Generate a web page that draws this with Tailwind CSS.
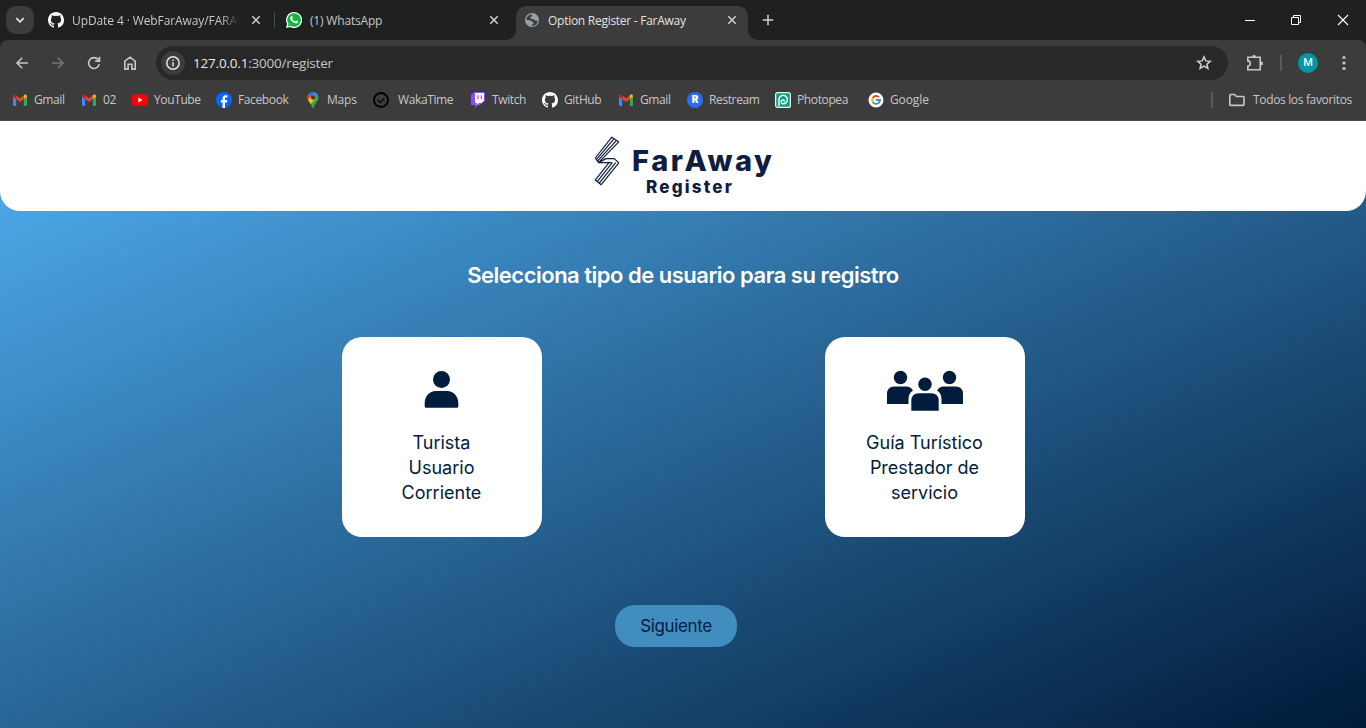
<!DOCTYPE html>
<html lang="es">
<head>
<meta charset="utf-8">
<title>Option Register - FarAway</title>
<script src="https://cdn.jsdelivr.net/npm/@tailwindcss/browser@4"></script>
</head>
<body class="w-[1366px] h-[728px] overflow-hidden flex flex-col bg-[#3c3c3c] font-['Open_Sans',sans-serif] text-[12px] text-[#c7c7c7]">
<svg width="0" height="0" class="absolute">
  <defs>
    <symbol id="github" viewBox="0 0 16 16"><path fill="#fff" d="M8 0C3.58 0 0 3.58 0 8c0 3.54 2.29 6.53 5.47 7.59.4.07.55-.17.55-.38 0-.19-.01-.82-.01-1.49-2.01.37-2.53-.49-2.69-.94-.09-.23-.48-.94-.82-1.13-.28-.15-.68-.52-.01-.53.63-.01 1.08.58 1.23.82.72 1.21 1.87.87 2.33.66.07-.52.28-.87.51-1.07-1.78-.2-3.64-.89-3.64-3.95 0-.87.31-1.59.82-2.15-.08-.2-.36-1.02.08-2.12 0 0 .67-.21 2.2.82.64-.18 1.32-.27 2-.27s1.36.09 2 .27c1.53-1.04 2.2-.82 2.2-.82.44 1.1.16 1.92.08 2.12.51.56.82 1.27.82 2.15 0 3.07-1.87 3.75-3.65 3.95.29.25.54.73.54 1.48 0 1.07-.01 1.93-.01 2.2 0 .21.15.46.55.38A8.01 8.01 0 0 0 16 8c0-4.42-3.58-8-8-8z"/></symbol>
    <symbol id="gmail" viewBox="0 0 16 16"><path fill="#4285f4" d="M1 4.5l3.2 2.4v7H2a1 1 0 0 1-1-1z"/><path fill="#34a853" d="M15 4.5l-3.2 2.4v7H14a1 1 0 0 0 1-1z"/><path fill="#ea4335" d="M4.2 3.4L8 6.3l3.8-2.9v3.7L8 10 4.2 7.1z"/><path fill="#c5221f" d="M1 4.3c0-1.6 1.7-2.2 2.8-1.3l.4.3v3.8L1 4.8z"/><path fill="#fbbc04" d="M15 4.3c0-1.6-1.7-2.2-2.8-1.3l-.4.3v3.8L15 4.8z"/></symbol>
    <symbol id="close" viewBox="0 0 10 10"><path d="M1.3 1.3l7.4 7.4M8.7 1.3L1.3 8.7" stroke="#d0d0d0" stroke-width="1.5" fill="none"/></symbol>
  </defs>
</svg>

<!-- Tab strip -->
<header class="h-10 shrink-0 bg-[#1f2120] flex items-start">
  <div class="ml-[6px] mt-[6px] w-7 h-7 rounded-[10px] bg-[#3c3c3c] flex items-center justify-center"><svg width="10" height="10" viewBox="0 0 10 10" fill="none" stroke="#e3e3e3" stroke-width="1.7"><path d="M1.3 3.2L5 6.8l3.7-3.6"/></svg></div>
  <div class="h-10 w-[241px] pl-[14px] flex items-center">
    <svg width="16" height="16" class="shrink-0"><use href="#github"/></svg>
    <div class="ml-2 w-[168px] overflow-hidden whitespace-nowrap pt-px tracking-[-0.1px] [mask-image:linear-gradient(90deg,#000_88%,transparent)]">UpDate 4 · WebFarAway/FARAW</div>
    <svg width="10" height="10" class="ml-[11px] shrink-0"><use href="#close"/></svg>
  </div>
  <div class="h-10 w-[241px] pl-[11px] flex items-center relative">
    <i class="absolute left-[-1px] top-3 w-px h-4 bg-[#4a4b4b]"></i>
    <svg width="16" height="16" viewBox="0 0 16 16" class="shrink-0"><path fill="#fff" d="M8 0a8 8 0 1 1-3.8 15L0 16l1.1-4A8 8 0 0 1 8 0z"/><path fill="#12b83d" d="M8 1.2a6.8 6.8 0 1 1-3.5 12.6l-2.8.7.8-2.7A6.8 6.8 0 0 1 8 1.2z"/><path fill="#fff" d="M5.1 4.2c.6-.6 1-.5 1.2 0l.6 1.4c.1.5-.7 1-.6 1.3.6 1.200 1.500 2 2.700 2.500.4.1.9-1.100 1.300-.9l1.500.8c.5.3.1 1.300-.4 1.700-1.100.9-3 .2-4.500-.9C5.300 9 4.300 7.500 4.200 6.300c0-.9.3-1.500.9-2.100z"/></svg>
    <div class="ml-2 w-[179px] whitespace-nowrap pt-px tracking-[-0.18px]">(1) WhatsApp</div>
    <svg width="10" height="10" class="shrink-0"><use href="#close"/></svg>
  </div>
  <div class="relative mt-[6px] h-[34px] w-[232px] rounded-t-[10px] bg-[#3c3c3c] flex items-center pl-[9px] pb-[6px] text-[#e3e3e3]">
    <svg class="absolute -left-[10px] bottom-0" width="10" height="10"><path fill="#3c3c3c" d="M10 0v10H0A10 10 0 0 0 10 0z"/></svg>
    <svg class="absolute -right-[10px] bottom-0" width="10" height="10"><path fill="#3c3c3c" d="M0 0v10h10A10 10 0 0 1 0 0z"/></svg>
    <svg width="14" height="14" viewBox="0 0 14 14" class="shrink-0"><circle cx="7" cy="7" r="7" fill="#9aa0a6"/><path d="M7.200 1.300L6.700 3.500 5 4.200l1.300 1.700 2.400.3 1.300 1.300 2.700.2A5.800 5.800 0 0 1 7.200 12.800L6 12.500l2-1.500.6-1.800L6.900 8.700 6 7.500 1.300 6.700A5.800 5.800 0 0 1 7.200 1.300z" fill="#3c3c3c"/></svg>
    <div class="ml-[9px] w-[179px] whitespace-nowrap pt-px tracking-[-0.27px]">Option Register - FarAway</div>
    <svg width="10" height="10" class="shrink-0"><use href="#close"/></svg>
  </div>
  <svg width="12" height="12" viewBox="0 0 12 12" class="ml-[14px] mt-[14px]" stroke="#d0d0d0" stroke-width="1.5"><path d="M6 .8v10.400M.8 6h10.400"/></svg>
  <div class="ml-auto mr-[21px] h-10 flex items-center gap-9">
    <svg width="10" height="10" stroke="#fff"><path d="M0 5.500h10"/></svg>
    <svg width="10" height="10" viewBox="0 0 10 10" fill="none" stroke="#fff"><path d="M.5 2.500h7v7h-7zM2.500 2.500v-2h7v7h-2"/></svg>
    <svg width="12" height="12" viewBox="0 0 12 12" stroke="#fff" stroke-width="1.100" class="-mr-1"><path d="M1 1l10 10M11 1L1 11"/></svg>
  </div>
</header>

<!-- Toolbar -->
<div class="bg-[#1f2120] shrink-0"><div class="h-[46px] bg-[#3c3c3c] rounded-t-[8px] flex items-center pl-[14px]">
  <div class="flex gap-5 w-[142px]">
    <svg width="16" height="16" viewBox="0 0 16 16" fill="none" stroke="#c7c7c7" stroke-width="1.600"><path d="M14 8H3M8.200 2.800L3 8l5.200 5.200"/></svg>
    <svg width="16" height="16" viewBox="0 0 16 16" fill="none" stroke="#757575" stroke-width="1.600"><path d="M2 8h11M7.800 2.800L13 8l-5.200 5.200"/></svg>
    <svg width="16" height="16" viewBox="0 0 16 16" fill="none" stroke="#c7c7c7" stroke-width="1.600"><path d="M13.300 9.200A5.400 5.400 0 1 1 12.200 4.600L13 5.500M13.500 1.800v4.300H9.200"/></svg>
    <svg width="16" height="16" viewBox="0 0 16 16" fill="none" stroke="#c7c7c7" stroke-width="1.600"><path d="M2.800 6.200L8 2.200l5.200 4v7.900H9.900V9.300H6.100v4.800H2.800z"/></svg>
  </div>
  <div class="w-[1072px] h-[34px] rounded-full bg-[#282828] flex items-center pl-[5px] text-[13.500px] tracking-[-0.2px]">
    <div class="w-6 h-6 rounded-full bg-[#3c3c3c] flex items-center justify-center"><svg width="14" height="14" viewBox="0 0 14 14" fill="none" stroke="#e3e3e3" stroke-width="1.500"><circle cx="7" cy="7" r="6.200"/><path d="M7 6.200v4.200M7 3.600v1.500"/></svg></div>
    <div class="ml-2 whitespace-nowrap"><span class="text-[#e8e8e8]">127.0.0.1</span>:3000/register</div>
    <svg width="16" height="16" viewBox="0 0 16 16" class="ml-auto mr-4" fill="none" stroke="#d0d0d0" stroke-width="1.500"><path d="M8 1.900l1.800 4 4.400.4-3.300 2.900 1 4.300L8 11.200l-3.900 2.300 1-4.300-3.300-2.900 4.400-.4z"/></svg>
  </div>
  <svg width="18" height="18" viewBox="0 0 18 18" class="ml-[18px]" fill="none" stroke="#c7c7c7" stroke-width="1.600"><path d="M1.800 3.300h12.400v12.400H1.800v-3.600c3.300-.3 3.300-4.900 0-5.200z"/><path fill="#c7c7c7" stroke="none" d="M6 3a2 2 0 0 1 4 0zM15 7.500a2 2 0 0 1 0 4z"/></svg>
  <i class="ml-4 w-[2px] h-4 bg-[#5a5a5a]"></i>
  <div class="ml-4 w-5 h-5 rounded-full bg-[#0097a7] text-white text-[11px] font-medium font-[Roboto,sans-serif] flex items-center justify-center">M</div>
  <svg width="4" height="16" viewBox="0 0 4 16" class="ml-6" fill="#c7c7c7"><circle cx="2" cy="2.500" r="1.600"/><circle cx="2" cy="8" r="1.600"/><circle cx="2" cy="13.500" r="1.600"/></svg>
</div></div>

<!-- Bookmarks bar -->
<nav class="h-[35px] shrink-0 border-b border-[#4a4a4a] flex items-center pl-3 pb-[7px] whitespace-nowrap tracking-[-0.38px]">
  <div class="w-[69px] flex items-center gap-1.5"><svg width="16" height="16"><use href="#gmail"/></svg>Gmail</div>
  <div class="w-[51px] flex items-center gap-1.5"><svg width="16" height="16"><use href="#gmail"/></svg>02</div>
  <div class="w-[84px] flex items-center gap-1.5"><svg width="16" height="16" viewBox="0 0 16 16"><rect y="2.200" width="16" height="11.600" rx="3" fill="#f00"/><path fill="#fff" d="M6.300 5.500L10.600 8l-4.300 2.500z"/></svg>YouTube</div>
  <div class="w-[89px] flex items-center gap-1.5"><svg width="16" height="16" viewBox="0 0 16 16"><circle cx="8" cy="8" r="8" fill="#0866ff"/><path fill="#fff" d="M6.600 16v-5.600H4.900V8h1.700V6.800c0-2.500 1.200-3.800 3.800-3.500l1 .1v2.100h-1.200c-.9 0-1.200.4-1.200 1.200V8h2.300l-.4 2.400H9V16z"/></svg>Facebook</div>
  <div class="w-[68px] flex items-center gap-1.5 tracking-[-0.2px]"><svg width="16" height="16" viewBox="0 0 16 16"><clipPath id="pin"><path d="M8 0a5.600 5.600 0 0 1 5.600 5.600c0 3.400-3.300 5.200-4.500 9-.4 1.900-1.800 1.900-2.200 0-1-3.700-4.500-5.600-4.500-9A5.600 5.600 0 0 1 8 0z"/></clipPath><g clip-path="url(#pin)"><path fill="#34a853" d="M0 0h16v16H0z"/><path fill="#4285f4" d="M4 0h12L8 7.500z"/><path fill="#1a73e8" d="M6 0h3L5 6 2 3z"/><path fill="#ea4335" d="M2 2l2.500.5L7 5 3 9z"/><path fill="#fbbc04" d="M2 9l5-5.500 3 3.500-5 6z"/></g><circle cx="8" cy="5.600" r="2.100" fill="#3c3c3c"/></svg>Maps</div>
  <div class="w-[97px] flex items-center gap-[9px]"><svg width="16" height="16" viewBox="0 0 16 16" fill="none" stroke="#000"><circle cx="8" cy="8" r="7" stroke-width="1.800"/><path d="M4.800 8l2.400 2.600 4.200-4.500" stroke-width="1.300"/></svg>WakaTime</div>
  <div class="w-[72px] flex items-center gap-1.5"><svg width="16" height="16" viewBox="0 0 16 16"><path fill="#9146ff" d="M4 0h11v9l-5 4H8l-3 3v-3H1V3z"/><path fill="#fff" d="M5 1h9v7.500L11.500 11H9l-2.200 2v-2H5z"/><path stroke="#9146ff" stroke-width="1.200" d="M8 3.200v4M11.300 3.200v4"/></svg>Twitch</div>
  <div class="w-[76px] flex items-center gap-1.5"><svg width="16" height="16"><use href="#github"/></svg>GitHub</div>
  <div class="w-[69px] flex items-center gap-1.5"><svg width="16" height="16"><use href="#gmail"/></svg>Gmail</div>
  <div class="w-[88px] flex items-center gap-1.5"><span class="w-4 h-4 rounded-full bg-[#2a6cf7] text-white text-[10px] font-black font-[Inter,sans-serif] flex items-center justify-center">R</span>Restream</div>
  <div class="w-[93px] flex items-center gap-1.5"><svg width="16" height="16" viewBox="0 0 16 16" fill="none"><rect x=".6" y=".6" width="14.800" height="14.800" rx="2" fill="#0fa08c" stroke="#e8f5f2" stroke-width="1.200"/><path stroke="#fff" stroke-width="1.400" d="M4 14V8.200a4.200 4.200 0 1 1 4.300 3.600c-2.300 0-2.900-3.400-.7-3.900 1.600-.3 2 1 1.200 1.700"/></svg>Photopea</div>
  <div class="flex items-center gap-1.5 tracking-[-0.1px]"><svg width="16" height="16" viewBox="0 0 16 16" fill="none"><circle cx="8" cy="8" r="7.500" fill="#fff"/><g stroke-width="1.900"><path stroke="#ea4335" d="M4.700 5.900a4 4 0 0 1 6.300-.7"/><path stroke="#fbbc05" d="M4.700 5.900a4 4 0 0 0 0 4.200"/><path stroke="#34a853" d="M4.700 10.100A4 4 0 0 0 10.600 11"/><path stroke="#4285f4" d="M8 8h4a4 4 0 0 1-1.400 3"/></g></svg>Google</div>
  <i class="ml-auto w-[2px] h-4 bg-[#5a5a5a]"></i>
  <svg width="18" height="16" viewBox="0 0 18 16" class="ml-[15px]" fill="none" stroke="#c7c7c7" stroke-width="1.600"><path d="M1.800 12.600V3.300q0-.8.800-.8h4l1.800 2h6.800q.8 0 .8.800v7.300q0 .8-.8.800H2.600q-.8 0-.8-.8z"/></svg>
  <span class="ml-[7px] w-[113px] tracking-[-0.34px]">Todos los favoritos</span>
</nav>

<!-- Page -->
<main class="h-[607px] shrink-0 bg-[linear-gradient(156deg,#50b0f2,#001a39)] font-[Inter,sans-serif] text-[#011c3c]">
  <div class="h-[90px] bg-white rounded-b-[20px] flex justify-center text-[#101d40]">
    <div class="w-[180px] pt-[14px] flex">
      <svg width="28" height="52" viewBox="0 0 28 52" class="shrink-0" fill="none" stroke="#101d40" stroke-width="1.200" stroke-linejoin="round"><path d="M18.800 2.200L2.300 23l3.200 4.600L25.800 6.900zM21.100 3.700L3.400 24.600M23.500 5.300L4.500 26.200M5.500 27.600L13 23.600h8.200l4.600 4.200M5.500 27.600h13M25.800 27.800L8.200 49.700l-6-4.600L16 27.600M19.300 27.600L4.200 46.700M22.700 27.600L6.200 48.200M2.200 45.100L8.200 49.700"/></svg>
      <div class="font-extrabold whitespace-nowrap">
        <div class="ml-[11px] mt-[11px] text-[29px] leading-[30px] tracking-[2.600px]">FarAway</div>
        <div class="ml-[25px] mt-[1px] text-[17px] leading-5 tracking-[2.200px]">Register</div>
      </div>
    </div>
  </div>
  <h1 class="mt-[47px] h-[34px] leading-[34px] text-center text-[22px] font-semibold text-white tracking-[-0.500px]">Selecciona tipo de usuario para su registro</h1>
  <div class="mt-[45px] flex justify-center gap-[283px] text-[18px] leading-[25px] text-center">
    <section class="w-[200px] h-[200px] rounded-[20px] bg-white flex flex-col items-center pt-[33px]">
      <svg width="36" height="40" viewBox="0 0 36 40" fill="#011c3c"><circle cx="17.500" cy="9.500" r="8.500"/><path d="M.7 36.500V33c0-7 5-12 11-12h11.600c6 0 11 5 11 12v3.500q0 1.300-1.300 1.300H2q-1.300 0-1.300-1.300z"/></svg>
      <p class="mt-5">Turista<br>Usuario<br>Corriente</p>
    </section>
    <section class="w-[200px] h-[200px] rounded-[20px] bg-white flex flex-col items-center pt-[33px]">
      <svg width="78" height="42" viewBox="0 0 78 42" fill="#011c3c"><circle cx="14.500" cy="7.500" r="6.700"/><circle cx="63.500" cy="7.500" r="6.700"/><path d="M1 34V24q0-7.500 7.500-7.500h12q4 0 6.500 4-4.500 2.500-4.500 8.500v5zM77 34V24q0-7.500-7.500-7.500h-12q-4 0-6.500 4 4.500 2.500 4.500 8.500v5z"/><circle cx="39" cy="14.300" r="6.700"/><path d="M25.300 40.700V31q0-7.800 7.500-7.800h12.400q7.500 0 7.500 7.800v9.700z"/></svg>
      <p class="mt-[18px]">Guía Turístico<br>Prestador de<br>servicio</p>
    </section>
  </div>
  <button class="block mt-[68px] ml-[615px] w-[122px] h-[42px] pt-[2px] rounded-[20px] bg-[#428dc0] text-[17px] tracking-[-0.350px]">Siguiente</button>
</main>
</body>
</html>
